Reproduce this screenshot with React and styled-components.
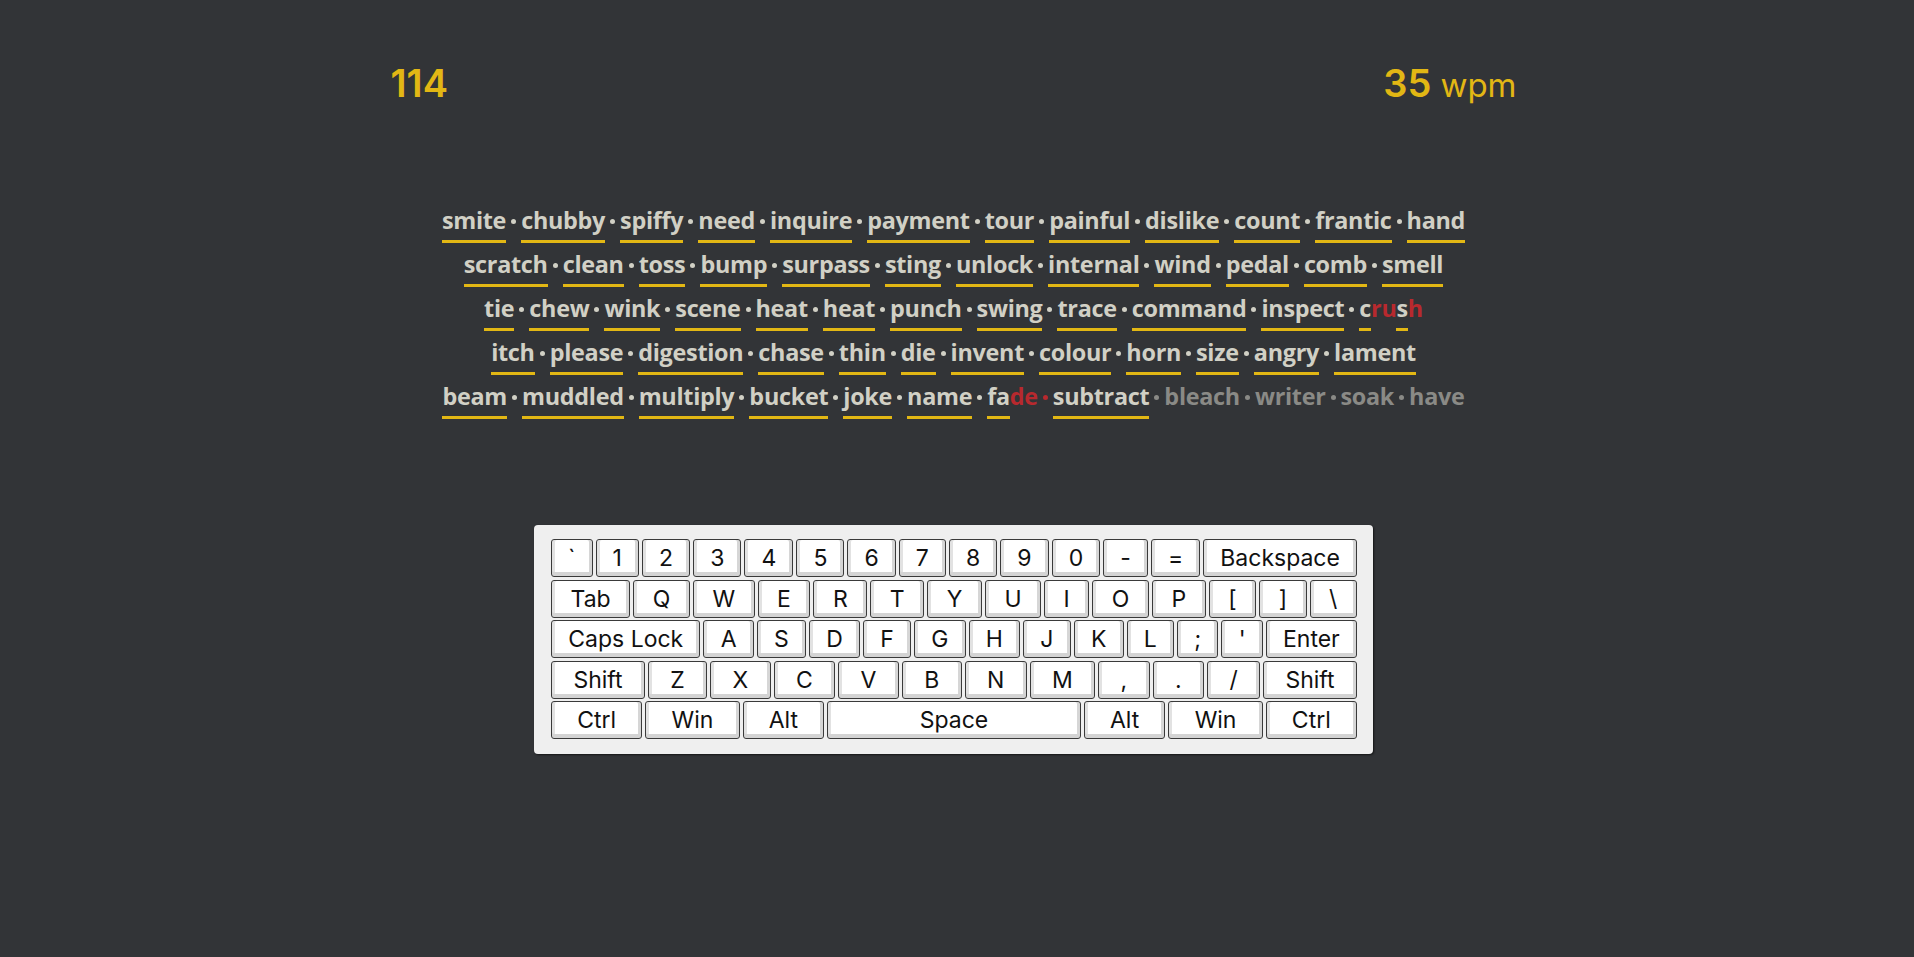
import styled, { createGlobalStyle } from "styled-components";

const GlobalStyle = createGlobalStyle`
  html, body {
    margin: 0;
    padding: 0;
    background: #323437;
  }
  body {
    font-family: "Inter", "Liberation Sans", sans-serif;
  }
`;

const Page = styled.div`
  min-height: 100vh;
  box-sizing: border-box;
  padding-right: 7px;
  background: #323437;
  display: flex;
  flex-direction: column;
  align-items: center;
`;

const Header = styled.div`
  width: 1126px;
  display: flex;
  justify-content: space-between;
  align-items: baseline;
  padding-top: 64px;
  color: #e2b714;
  font-family: "Inter", sans-serif;
`;

const Count = styled.div`
  font-size: 38px;
  font-weight: 600;
  line-height: 1;
`;

const Speed = styled.div`
  display: flex;
  align-items: baseline;
  gap: 9px;
  line-height: 1;
`;

const SpeedValue = styled.span`
  font-size: 38px;
  font-weight: 600;
`;

const SpeedUnit = styled.span`
  font-size: 33px;
  font-weight: 400;
`;

const Words = styled.div`
  margin-top: 106px;
  display: flex;
  flex-direction: column;
  align-items: center;
  gap: 9px;
  font-family: "Open Sans", sans-serif;
  font-weight: 700;
  font-size: 23.4px;
  letter-spacing: -0.3px;
`;

const Line = styled.div`
  display: flex;
  align-items: flex-start;
  line-height: 24px;
`;

const Word = styled.span`
  display: inline-flex;
`;

const colors = {
  ok: "#d1d0c5",
  err: "#b8292e",
  todo: "#8a8a86",
};

const Letter = styled.span`
  display: inline-block;
  color: ${(p) => colors[p.state]};
  padding-bottom: 8px;
  border-bottom: 3px solid ${(p) => (p.state === "ok" ? "#e2b714" : "transparent")};
`;

const Sep = styled.span`
  display: inline-block;
  width: 5px;
  height: 5px;
  border-radius: 50%;
  margin: 11px 5px 0;
  background: ${(p) => colors[p.state]};
`;

const Keyboard = styled.div`
  margin-top: 106px;
  width: 839px;
  box-sizing: border-box;
  padding: 14px 16px 15px 17px;
  background: #efefef;
  border-radius: 4px;
  box-shadow: 1px 1px 2px rgba(0, 0, 0, 0.6);
  display: flex;
  flex-direction: column;
  gap: 2.5px;
`;

const KeyRow = styled.div`
  display: flex;
  gap: 3px;
`;

const Key = styled.div`
  flex: ${(p) => p.grow || 1} 1 auto;
  height: 38px;
  box-sizing: border-box;
  padding: 0 15px;
  display: flex;
  align-items: center;
  justify-content: center;
  white-space: nowrap;
  font-family: "Inter", sans-serif;
  font-size: 23px;
  font-weight: 400;
  color: #111;
  background: #fff;
  border: 1px solid #3a3a3a;
  border-radius: 3px;
  box-shadow: inset 0 -4px 0 #d4d4d4, inset 3px 0 0 #e2e2e2,
    inset -3px 0 0 #d6d6d6;
`;

const lines = [
  "smite chubby spiffy need inquire payment tour painful dislike count frantic hand",
  "scratch clean toss bump surpass sting unlock internal wind pedal comb smell",
  "tie chew wink scene heat heat punch swing trace command inspect crush",
  "itch please digestion chase thin die invent colour horn size angry lament",
  "beam muddled multiply bucket joke name fade subtract bleach writer soak have",
];

// per-letter states for partly wrong words; o = ok, x = error
const marks = {
  crush: "oxxox",
  fade: "ooxx",
};
const pending = ["bleach", "writer", "soak", "have"];

const buildLine = (text, li) =>
  text.split(" ").map((w, wi) => {
    const isTodo = li === 4 && pending.includes(w);
    const letters = w.split("").map((ch, ci) => {
      let state = isTodo ? "todo" : "ok";
      if (marks[w]) state = marks[w][ci] === "x" ? "err" : "ok";
      return { ch, state };
    });
    let sepState = isTodo ? "todo" : "ok";
    if (w === "fade") sepState = "err";
    if (li === 4 && w === "subtract") sepState = "todo";
    return { w, letters, sepState, key: `${li}-${wi}` };
  });

const keyRows = [
  ["`", "1", "2", "3", "4", "5", "6", "7", "8", "9", "0", "-", "=", "Backspace"],
  ["Tab", "Q", "W", "E", "R", "T", "Y", "U", "I", "O", "P", "[", "]", "\\"],
  ["Caps Lock", "A", "S", "D", "F", "G", "H", "J", "K", "L", ";", "'", "Enter"],
  ["Shift", "Z", "X", "C", "V", "B", "N", "M", ",", ".", "/", "Shift"],
  ["Ctrl", "Win", "Alt", "Space", "Alt", "Win", "Ctrl"],
];

const App = () => {
  return (
    <Page>
      <GlobalStyle />
      <Header>
        <Count>114</Count>
        <Speed>
          <SpeedValue>35</SpeedValue>
          <SpeedUnit>wpm</SpeedUnit>
        </Speed>
      </Header>

      <Words>
        {lines.map((text, li) => {
          const words = buildLine(text, li);
          return (
            <Line key={li}>
              {words.map((word, wi) => (
                <Word key={word.key}>
                  {word.letters.map((l, ci) => (
                    <Letter key={ci} state={l.state}>
                      {l.ch}
                    </Letter>
                  ))}
                  {wi < words.length - 1 && <Sep state={word.sepState} />}
                </Word>
              ))}
            </Line>
          );
        })}
      </Words>

      <Keyboard>
        {keyRows.map((row, ri) => (
          <KeyRow key={ri}>
            {row.map((k, ki) => (
              <Key key={ki} grow={k === "Space" ? 7.5 : 1}>
                {k}
              </Key>
            ))}
          </KeyRow>
        ))}
      </Keyboard>
    </Page>
  );
};

export default App;
